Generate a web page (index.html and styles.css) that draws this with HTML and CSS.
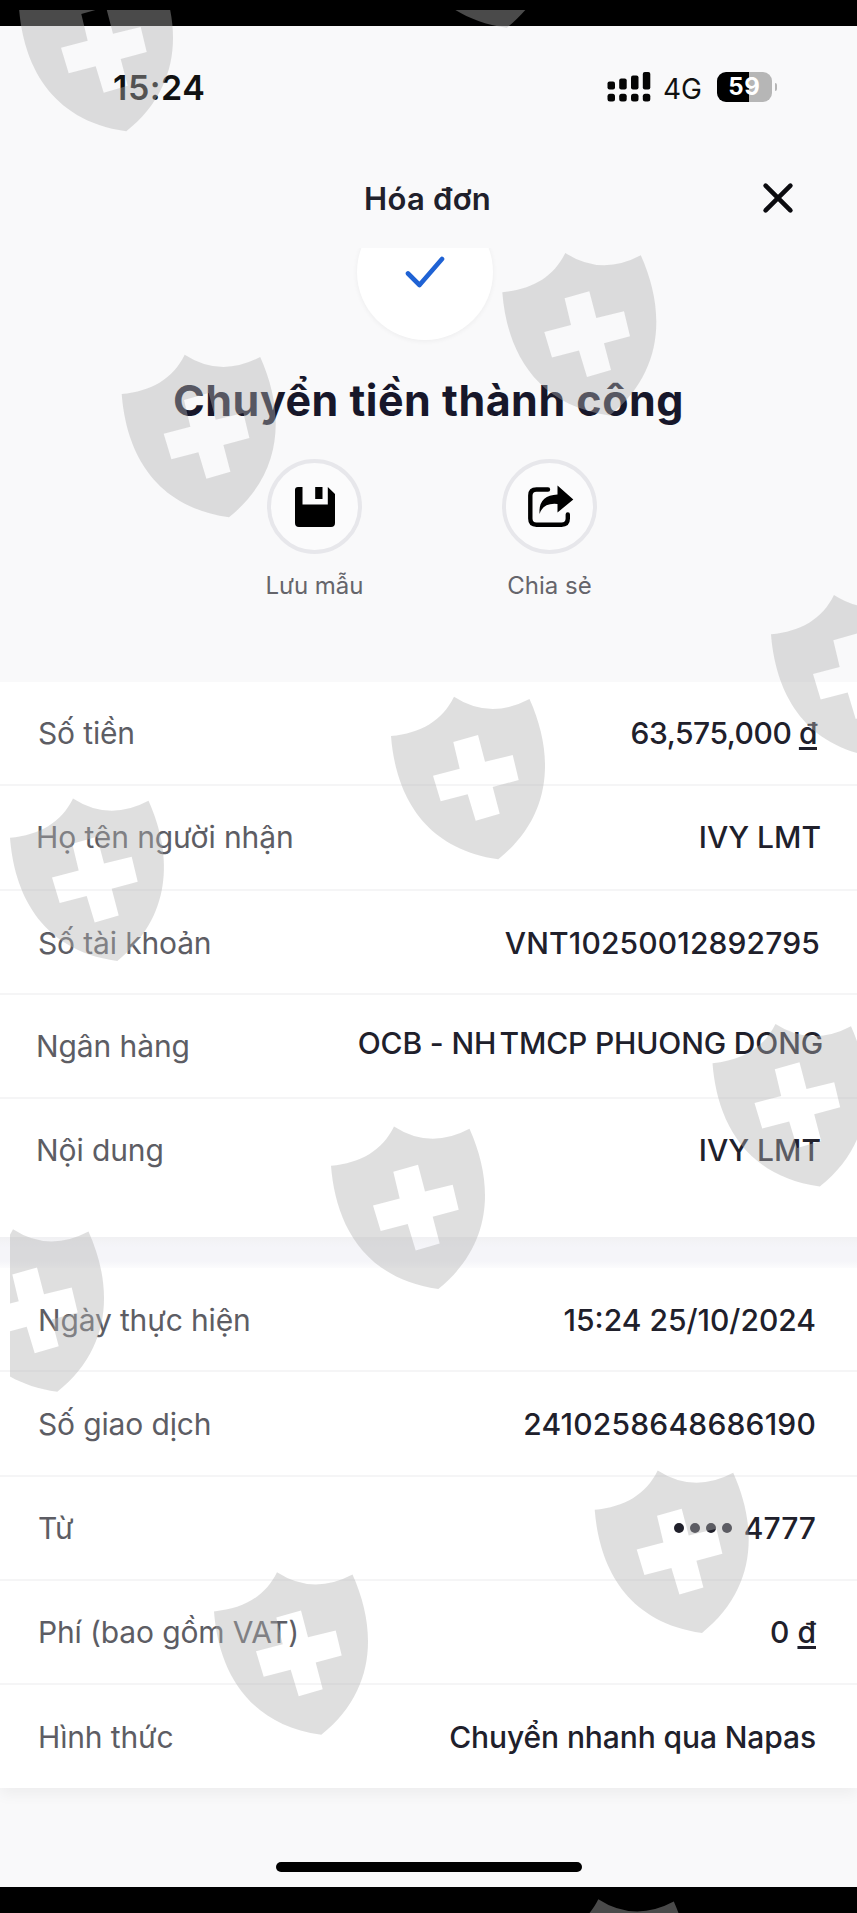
FILE: index.html
```html
<!DOCTYPE html>
<html lang="vi">
<head>
    <meta charset="UTF-8">
    <meta name="viewport" content="width=device-width, initial-scale=1.0">
    <title>Hóa đơn</title>
    <link rel="stylesheet" href="styles.css">
</head>
<body>
    <div class="screen">
        <!-- Status bar -->
        <div class="status-bar">
            <span class="time">15:24</span>
            <div class="status-icons">
                <svg class="signal" width="44" height="30" viewBox="0 0 44 30">
                    <rect x="0.5" y="9.5" width="7.5" height="8" rx="2"/>
                    <rect x="12.2" y="6.5" width="7.5" height="11" rx="2"/>
                    <rect x="24" y="3.5" width="7.5" height="14" rx="2"/>
                    <rect x="35.8" y="0" width="7.5" height="17.5" rx="2"/>
                    <rect x="0.5" y="21.7" width="7.5" height="7.8" rx="2.5"/>
                    <rect x="12.2" y="21.7" width="7.5" height="7.8" rx="2.5"/>
                    <rect x="24" y="21.7" width="7.5" height="7.8" rx="2.5"/>
                    <rect x="35.8" y="21.7" width="7.5" height="7.8" rx="2.5"/>
                </svg>
                <span class="network">4G</span>
                <span class="battery">59</span>
                <span class="battery-tip"></span>
            </div>
        </div>

        <!-- Header -->
        <header class="header">
            <h1>Hóa đơn</h1>
            <svg class="close" width="34" height="34" viewBox="0 0 34 34">
                <path d="M4.6 4.6L29.4 29.4M29.4 4.6L4.6 29.4"/>
            </svg>
        </header>

        <!-- Result -->
        <section class="result">
            <div class="check-wrap">
                <div class="check-circle">
                    <svg width="40" height="32" viewBox="0 0 40 32">
                        <path d="M3 17.5L14.5 29L37 3"/>
                    </svg>
                </div>
            </div>
            <h2>Chuyển tiền thành công</h2>
            <div class="actions">
                <div class="action">
                    <div class="action-icon">
                        <svg width="48" height="44" viewBox="0 0 48 44">
                            <path d="M7 2H11.5V19.4H36.8V2L44 9V38Q44 42 40 42H8Q4 42 4 38V5Q4 2 7 2Z"/>
                            <rect x="24.2" y="2" width="7.3" height="12"/>
                        </svg>
                    </div>
                    <span>Lưu mẫu</span>
                </div>
                <div class="action">
                    <div class="action-icon">
                        <svg width="48" height="44" viewBox="0 0 48 44">
                            <path class="line" d="M22 4.5H10.500Q4.300 4.500 4.300 10.500V33.5Q4.300 39.7 10.500 39.7H35.500Q41.800 39.7 41.800 33.5V29.5"/>
                            <path d="M13.6 29Q12 10.5 31.5 9.5V0.500L47.300 14.500L31.500 27.500V19Q17 17.500 13.600 29Z"/>
                        </svg>
                    </div>
                    <span>Chia sẻ</span>
                </div>
            </div>
        </section>

        <!-- Transfer details -->
        <dl class="details">
            <div class="row"><dt>Số tiền</dt><dd class="amount">63,575,000 <u>đ</u></dd></div>
            <div class="row"><dt class="outdent">Họ tên người nhận</dt><dd class="name">IVY LMT</dd></div>
            <div class="row row-low"><dt>Số tài khoản</dt><dd class="account">VNT10250012892795</dd></div>
            <div class="row"><dt class="outdent">Ngân hàng</dt><dd class="bank">OCB - NH<span class="thin"> </span>TMCP PHUONG DONG</dd></div>
            <div class="row row-tall"><dt class="outdent">Nội dung</dt><dd class="name">IVY LMT</dd></div>
        </dl>
        <div class="divider"></div>
        <dl class="details details-second">
            <div class="row row-low"><dt>Ngày thực hiện</dt><dd>15:24 25/10/2024</dd></div>
            <div class="row row-low"><dt>Số giao dịch</dt><dd class="trans">2410258648686190</dd></div>
            <div class="row"><dt>Từ</dt><dd class="from"><span class="dots"><i></i><i></i><i></i><i></i></span>4777</dd></div>
            <div class="row"><dt>Phí (bao gồm VAT)</dt><dd>0 <u>đ</u></dd></div>
            <div class="row"><dt>Hình thức</dt><dd class="method">Chuyển nhanh qua Napas</dd></div>
        </dl>
        <footer class="footer"><div class="home-bar"></div></footer>
    </div>

    <!-- Watermark -->
    <svg class="watermark" width="857" height="1913" viewBox="0 0 857 1913">
        <defs>
            <path id="shield" fill-rule="evenodd" d="M0 0C30 -3 51 -15 63 -39.3Q99 -16 138.5 -37C164 20 161 80 107.3 123.3C28 112 4 52 0 0ZM62.3 6L87 -1L94 25.7L121.7 19L127.7 44L101.7 51L108.7 77.7L84.7 84.7L76.7 58.3L49.7 65.3L42 39.7L68.7 32.7Z"/>
            <clipPath id="area"><rect x="10" y="10" width="847" height="1903"/></clipPath>
        </defs>
        <g clip-path="url(#area)">
            <use href="#shield" x="19" y="8"/>
            <use href="#shield" x="399.5" y="-95.5"/>
            <use href="#shield" x="502.3" y="292.3"/>
            <use href="#shield" x="121.7" y="394"/>
            <use href="#shield" x="771" y="634.3"/>
            <use href="#shield" x="391" y="736"/>
            <use href="#shield" x="10" y="837.7"/>
            <use href="#shield" x="712.5" y="1063.3"/>
            <use href="#shield" x="331" y="1165.7"/>
            <use href="#shield" x="-50" y="1268.5"/>
            <use href="#shield" x="594.7" y="1509.7"/>
            <use href="#shield" x="214" y="1611.5"/>
            <use href="#shield" x="535.3" y="1938.6"/>
        </g>
    </svg>
</body>
</html>
```
FILE: styles.css
```css
* {
    box-sizing: border-box;
}

body {
    margin: 0;
    padding: 26px 0;
    height: 1913px;
    background: black;
    font-family: Inter, "Liberation Sans", sans-serif;
    color: #20202b;
    overflow: hidden;
}

h1, h2, dl, dt, dd {
    margin: 0;
}

.screen {
    height: 1861px;
    background: #f9f9fa;
    display: flex;
    flex-direction: column;
}

.status-bar {
    height: 122px;
    padding: 0 79px 0 113px;
    display: flex;
    justify-content: space-between;
    align-items: center;
    color: #111;
}

.time {
    font-size: 34px;
    font-weight: 600;
    letter-spacing: 0.5px;
}

.status-icons {
    display: flex;
    align-items: center;
}

.signal {
    fill: #050505;
    margin-right: 12px;
}

.network {
    font-size: 28px;
    line-height: 30px;
    padding-top: 3px;
    margin-right: 15px;
}

.battery {
    width: 55px;
    height: 30px;
    line-height: 30px;
    border-radius: 9px;
    background: linear-gradient(to right, black 59%, #b6b6b6 59%);
    color: white;
    font-size: 24px;
    font-weight: 700;
    letter-spacing: 0.8px;
    text-align: center;
}

.battery-tip {
    width: 2px;
    height: 8px;
    margin-left: 3px;
    margin-right: 1px;
    border-radius: 0 2px 2px 0;
    background: #b6b6b6;
}

.header {
    height: 100px;
    padding: 0 61px 0 364px;
    display: flex;
    justify-content: space-between;
    align-items: center;
}

.header h1 {
    font-size: 31px;
    font-weight: 600;
    letter-spacing: 0.3px;
}

.close {
    margin-right: 1px;
    fill: none;
    stroke: #0c0c10;
    stroke-width: 4.6;
    stroke-linecap: round;
}

.result {
    height: 434px;
    display: flex;
    flex-direction: column;
    align-items: center;
}

.check-wrap {
    width: 150px;
    height: 98px;
    margin-right: 7px;
    overflow: hidden;
    display: flex;
    align-items: flex-end;
    justify-content: center;
    padding-bottom: 6px;
}

.check-circle {
    flex: none;
    width: 136px;
    height: 136px;
    border-radius: 50%;
    background: white;
    box-shadow: 0 1px 4px 1px rgba(0, 0, 0, 0.04);
    display: flex;
    align-items: center;
    justify-content: center;
}

.check-circle svg {
    fill: none;
    stroke: #1f62d4;
    stroke-width: 4.6;
    stroke-linecap: round;
    stroke-linejoin: round;
}

.result h2 {
    margin-top: 29px;
    font-size: 43px;
    line-height: 50px;
    font-weight: 700;
    letter-spacing: 0.5px;
    color: #17172a;
    white-space: nowrap;
}

.actions {
    margin-top: 34px;
    display: flex;
    gap: 35px;
    padding-left: 7px;
}

.action {
    width: 200px;
    display: flex;
    flex-direction: column;
    align-items: center;
    font-size: 24px;
    line-height: 30px;
    color: #65656b;
}

.action-icon {
    width: 95px;
    height: 95px;
    margin-bottom: 17px;
    border: 4px solid #e7e7eb;
    border-radius: 50%;
    background: #fbfbfc;
    display: flex;
    align-items: center;
    justify-content: center;
}

.action-icon .line {
    fill: none;
    stroke: black;
    stroke-width: 4.4;
    stroke-linecap: round;
}

.details {
    background: white;
    height: 555px;
}

.divider {
    height: 31px;
    background: linear-gradient(#f1f1f3, #f5f5f9 10px, #f5f5f9 24px, #fcfcfd);
}

.details-second {
    height: 520px;
    box-shadow: 0 6px 14px rgba(0, 0, 0, 0.05);
    clip-path: inset(0 0 -24px 0);
}

.row {
    height: 104.3px;
    padding: 0 41px 0 38px;
    border-bottom: 2px solid #f5f5f6;
    display: flex;
    justify-content: space-between;
    align-items: center;
    font-size: 30px;
    white-space: nowrap;
}

.row:last-child {
    border-bottom: none;
}

.row-low {
    padding-top: 2px;
}

.row-tall {
    padding-bottom: 37px;
    height: 138px;
}

.row dt {
    color: #5d5d64;
    letter-spacing: -0.15px;
}

.row .outdent {
    margin-left: -2px;
    letter-spacing: -0.1px;
}

.row dd {
    font-weight: 500;
}

.row u {
    text-underline-offset: 3px;
    text-decoration-thickness: 3px;
}

.row .amount {
    letter-spacing: -0.45px;
    margin-right: -1px;
}

.row .name {
    margin-right: -5px;
}

.row .account {
    letter-spacing: 0.15px;
    margin-right: -4px;
}

.row .bank {
    letter-spacing: -0.15px;
    margin-right: -7px;
    padding-bottom: 7px;
}

.thin {
    word-spacing: -4.5px;
}

.row .trans {
    letter-spacing: 0.2px;
}

.row .method {
    letter-spacing: -0.1px;
}

.from {
    display: flex;
    align-items: center;
}

.dots {
    display: flex;
    gap: 6px;
    margin-right: 12px;
}

.dots i {
    width: 10px;
    height: 10px;
    border-radius: 50%;
    background: #20202b;
}

.footer {
    flex: 1;
    display: flex;
    justify-content: center;
    padding-top: 74px;
}

.home-bar {
    width: 306px;
    height: 10px;
    border-radius: 5px;
    background: black;
}

.watermark {
    position: absolute;
    top: 0;
    left: 0;
    fill: rgba(178, 178, 178, 0.416);
    pointer-events: none;
}
```
